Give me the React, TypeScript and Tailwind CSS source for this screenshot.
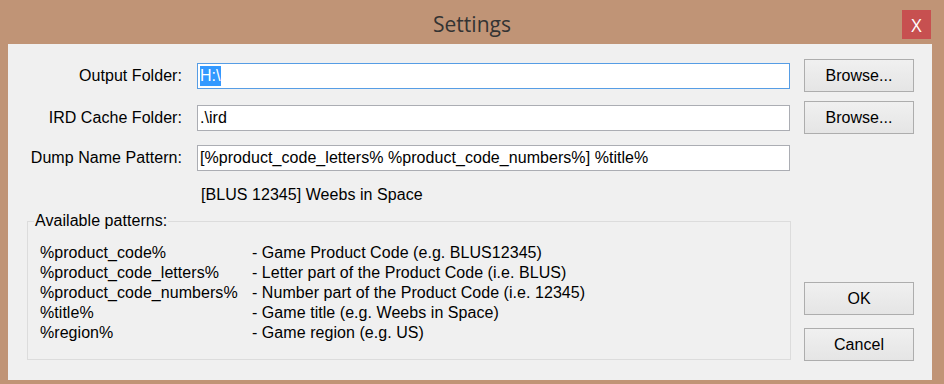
const patterns = [
  ['%product_code%', '- Game Product Code (e.g. BLUS12345)'],
  ['%product_code_letters%', '- Letter part of the Product Code (i.e. BLUS)'],
  ['%product_code_numbers%', '- Number part of the Product Code (i.e. 12345)'],
  ['%title%', '- Game title (e.g. Weebs in Space)'],
  ['%region%', '- Game region (e.g. US)'],
];

function WinButton({ label }: { label: string }) {
  return (
    <div className="w-[110px] h-[33px] flex items-center justify-center border border-[#adadad] bg-linear-to-b from-[#f0f0f0] to-[#e5e5e5] text-black">
      {label}
    </div>
  );
}

export default function App() {
  return (
    <div
      className="w-[944px] h-[384px] bg-[#c09476] flex flex-col text-[16px] tracking-[0.05px] leading-[20px] text-black"
      style={{ fontFamily: '"Liberation Sans", Arial, sans-serif' }}
    >
      <div className="h-[44px] relative flex items-center justify-center">
        <span
          className="text-[21px] tracking-normal text-[#333333] mt-[3px]"
          style={{ fontFamily: '"Open Sans", "Noto Sans", sans-serif' }}
        >
          Settings
        </span>
        <div
          className="absolute left-[902px] top-[10px] w-[29px] h-[29px] bg-[#c75050] flex items-center justify-center text-white text-[18px]"
          style={{ fontFamily: '"Open Sans", sans-serif' }}
        >
          X
        </div>
      </div>

      <div className="ml-[8px] mr-[12px] h-[336px] bg-[#f0f0f0] flex flex-col pt-[15px]">
        <div className="flex items-center h-[33px]">
          <div className="w-[174px] text-right">Output Folder:</div>
          <div className="ml-[15px] w-[593px] h-[26px] border border-[#569de5] bg-white flex items-center pl-[2px]">
            <span className="bg-[#3399ff] text-white leading-[20px]">H:\</span>
          </div>
          <div className="ml-[14px]">
            <WinButton label="Browse..." />
          </div>
        </div>

        <div className="flex items-center h-[33px] mt-[9px]">
          <div className="w-[174px] text-right">IRD Cache Folder:</div>
          <div className="ml-[15px] w-[593px] h-[26px] border border-[#abadb3] bg-white flex items-center pl-[2px]">
            .\ird
          </div>
          <div className="ml-[14px]">
            <WinButton label="Browse..." />
          </div>
        </div>

        <div className="flex items-center h-[26px] mt-[11px]">
          <div className="w-[174px] text-right">Dump Name Pattern:</div>
          <div className="ml-[15px] w-[593px] h-[26px] border border-[#abadb3] bg-white flex items-center pl-[2px]">
            [%product_code_letters% %product_code_numbers%] %title%
          </div>
        </div>

        <div className="mt-[14px] pl-[193px]">[BLUS 12345] Weebs in Space</div>

        <div className="flex mt-[7px]">
          <fieldset className="ml-[19px] w-[764px] h-[148px] border border-[#dcdcdc] pl-[6px] pt-[13px]">
            <legend className="px-[1px] leading-[18px]">Available patterns:</legend>
            {patterns.map(([k, v]) => (
              <div key={k} className="flex pl-[6px]">
                <div className="w-[212px]">{k}</div>
                <div>{v}</div>
              </div>
            ))}
          </fieldset>

          <div className="ml-[13px] pt-[70px] flex flex-col gap-[13px]">
            <WinButton label="OK" />
            <WinButton label="Cancel" />
          </div>
        </div>
      </div>
    </div>
  );
}
